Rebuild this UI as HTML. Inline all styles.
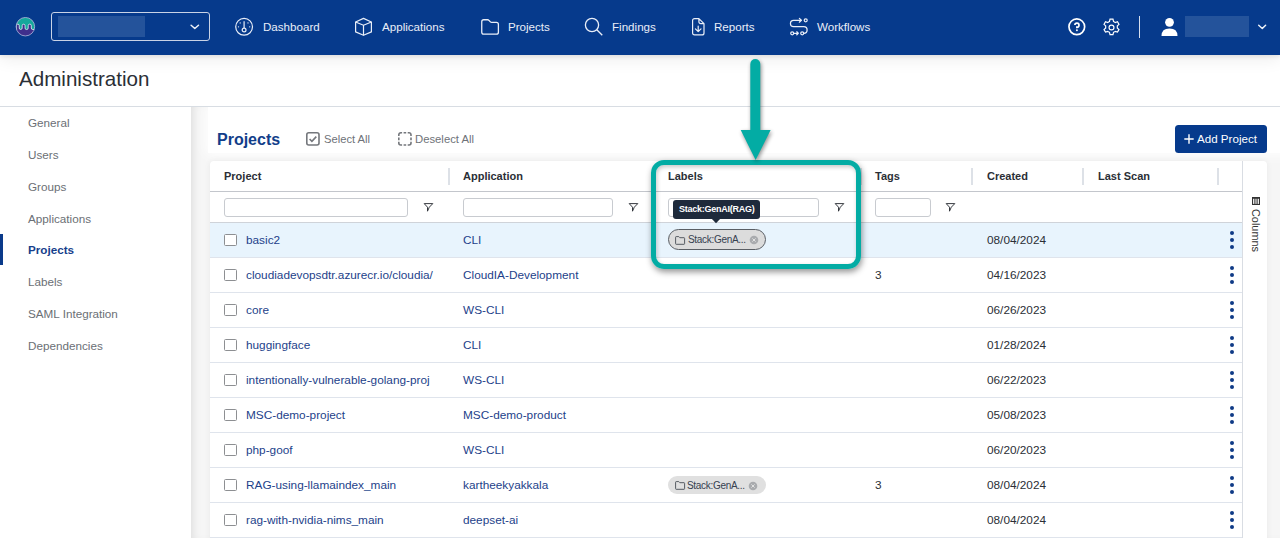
<!DOCTYPE html>
<html><head><meta charset="utf-8">
<style>
*{box-sizing:border-box;margin:0;padding:0}
html,body{width:1280px;height:538px;overflow:hidden;background:#fff;font-family:"Liberation Sans",sans-serif;position:relative}
.abs{position:absolute}
#hdr{position:absolute;left:0;top:0;width:1280px;height:55px;background:#063a8c;z-index:5;box-shadow:0 2px 4px rgba(0,0,0,.08), 0 4px 16px rgba(0,0,0,.08)}
.nav{position:absolute;top:13px;height:28px;color:#e9eef8;font-size:11.6px;line-height:28px;white-space:nowrap}
#titlebar{z-index:3;position:absolute;left:0;top:54px;width:1280px;height:53px;background:#fff;border-bottom:1px solid #d8dde3}
#titlebar span{position:absolute;left:19px;top:13px;font-size:20.6px;line-height:24px;color:#2b2f36}
#side{position:absolute;left:0;top:107px;width:191px;height:431px;background:#fff}
.si{position:absolute;left:28px;font-size:11.7px;line-height:14px;color:#6b6f75;white-space:nowrap}
#main{position:absolute;left:191px;top:107px;width:1089px;height:431px;background:#f6f6f6;box-shadow:inset 7px 0 8px -5px rgba(0,0,0,.10)}
#tb{position:absolute;left:208px;top:107px;width:1090px;height:46px;background:#fff;box-shadow:0 0 12px 2px #fff}
#card{position:absolute;left:210px;top:161px;width:1057px;height:400px;background:#fff;border-radius:4px;box-shadow:0 0 6px rgba(0,0,0,.06)}
.hd{position:absolute;top:169px;font-size:11px;line-height:14px;font-weight:bold;color:#2b2f36;white-space:nowrap}
.sep{position:absolute;top:168px;width:1.5px;height:17px;background:#dde1e7}
.fin{position:absolute;top:198px;height:19px;border:1px solid #c8cbd0;border-radius:3px;background:#fff}
.row{position:absolute;left:210px;width:1032px;height:35px;border-bottom:1px solid #dfe4ec}
.cell{position:absolute;font-size:11.8px;line-height:14px;color:#1d3f8a;white-space:nowrap}
.cb{position:absolute;left:224px;width:13px;height:13px;border:1.6px solid #8d8f92;border-radius:1.5px;background:#fff}
.chip{position:absolute;left:668px;width:98px;height:21px;border:1.2px solid #5a5e64;border-radius:11px;background:#dcdcdc;font-size:10px;letter-spacing:-0.3px;color:#364150;white-space:nowrap}
.chip span{position:absolute;left:19px;top:4px;line-height:12px}
.dk{position:absolute;left:1230px;width:4px;height:4px;border-radius:50%;background:#0f3a86}
</style></head>
<body>
<div id="hdr">
<svg class="abs" style="left:15px;top:17px" width="21" height="21" viewBox="0 0 21 21">
<defs><clipPath id="lc"><circle cx="10.4" cy="9.7" r="9.2"/></clipPath></defs>
<circle cx="10.4" cy="9.7" r="9.2" fill="#3f2f8c"/>
<path clip-path="url(#lc)" d="M-1,-1 H22 V12.5 H17.8 A1.5,1.5 0 0 1 16.3,11 V8.65 A1.55,1.55 0 0 0 13.2,8.65 V11 A1.575,1.575 0 0 1 10.05,11 V8.65 A1.45,1.45 0 0 0 7.15,8.65 V11 A1.45,1.45 0 0 1 4.25,11 V8.65 A1.5,1.5 0 0 0 1.25,8.65 V22 H-1 Z" fill="#15a89c" stroke="#e8f0f8" stroke-width="0.8"/>
<circle cx="10.4" cy="9.7" r="9.25" fill="none" stroke="#c7c9e6" stroke-width="0.7"/>
</svg>
<div class="abs" style="left:51px;top:12px;width:159px;height:29px;border:1.5px solid #c9d3e6;border-radius:3px"></div>
<div class="abs" style="left:58px;top:16px;width:87px;height:21px;background:#24539b"></div>
<svg class="abs" style="left:189px;top:22px" width="11" height="8" viewBox="0 0 11 8"><path d="M2.1,3.3 L5.8,6.5 L9.5,3.3" fill="none" stroke="#eef2f8" stroke-width="1.5" stroke-linecap="round" stroke-linejoin="round"/></svg>
<svg class="abs" style="left:234px;top:17px" width="20" height="20" viewBox="0 0 20 20" fill="none" stroke="#e9eef8" stroke-width="1.2">
<circle cx="10.1" cy="9.8" r="8.4"/><path d="M10.1,4.2 V11.1"/><circle cx="10.1" cy="13" r="1.9"/>
<g fill="#e9eef8" stroke="none"><circle cx="6.2" cy="5.9" r=".65"/><circle cx="14" cy="5.9" r=".65"/><circle cx="4.5" cy="9.8" r=".65"/><circle cx="15.7" cy="9.8" r=".65"/></g>
</svg>
<div class="nav" style="left:263px">Dashboard</div>
<svg class="abs" style="left:354px;top:17px" width="20" height="20" viewBox="0 0 20 20" fill="none" stroke="#e9eef8" stroke-width="1.2" stroke-linejoin="round">
<path d="M9.5,1.4 L17.4,5 V14.9 L9.5,18.3 L1.6,14.9 V5 Z"/><path d="M1.6,5 L9.5,8.2 L17.4,5 M9.5,8.2 V18.3"/></svg>
<div class="nav" style="left:382px">Applications</div>
<svg class="abs" style="left:480px;top:18px" width="20" height="18" viewBox="0 0 20 18" fill="none" stroke="#e9eef8" stroke-width="1.3" stroke-linejoin="round">
<path d="M1.75,3.75 Q1.75,1.75 3.75,1.75 H7.6 Q8.3,1.75 8.8,2.3 L10.4,3.9 Q10.9,4.4 11.6,4.4 H16.4 Q18.4,4.4 18.4,6.4 V14.2 Q18.4,16.2 16.4,16.2 H3.75 Q1.75,16.2 1.75,14.2 Z"/></svg>
<div class="nav" style="left:508px">Projects</div>
<svg class="abs" style="left:584px;top:17px" width="20" height="20" viewBox="0 0 20 20" fill="none" stroke="#e9eef8" stroke-width="1.3">
<circle cx="8" cy="8" r="6.6"/><path d="M12.8,12.8 L18.3,18.3"/></svg>
<div class="nav" style="left:612px">Findings</div>
<svg class="abs" style="left:690px;top:17px" width="16" height="20" viewBox="0 0 16 20" fill="none" stroke="#e9eef8" stroke-width="1.2" stroke-linejoin="round" stroke-linecap="round">
<path d="M2.6,3.6 Q2.6,1.6 4.6,1.6 H8.9 L14,6.7 V15.9 Q14,17.9 12,17.9 H4.6 Q2.6,17.9 2.6,15.9 Z M8.9,1.6 V4.7 Q8.9,6.7 10.9,6.7 H14"/><path d="M8.2,9.1 V14.6 M5.4,11.9 L8.2,14.7 L11,11.9"/></svg>
<div class="nav" style="left:714px">Reports</div>
<svg class="abs" style="left:789px;top:17px" width="20" height="20" viewBox="0 0 20 20" fill="none" stroke="#e9eef8" stroke-width="1.25" stroke-linecap="round" stroke-linejoin="round">
<path d="M12.2,3.3 H4.6 A3.15,3.15 0 0 0 4.6,9.6 H14.8 A3.35,3.35 0 0 1 14.7,16.3"/><path d="M10.4,1.4 L12.3,3.3 L10.4,5.2"/><circle cx="16.7" cy="3.3" r="1.5"/>
<circle cx="3.2" cy="16.3" r="1.5"/><circle cx="13.2" cy="16.3" r="1.5"/><path d="M5.2,16.3 H9.2 M7.8,14.8 L9.3,16.3 L7.8,17.8"/></svg>
<div class="nav" style="left:817px">Workflows</div>
<svg class="abs" style="left:1067px;top:17px" width="20" height="20" viewBox="0 0 20 20" fill="none" stroke="#fff" stroke-width="1.7">
<circle cx="9.8" cy="9.8" r="7.85"/><path d="M7.9,8.1 A2.05,2.05 0 1 1 9.9,10.2 V11.3" stroke-width="1.7"/><circle cx="9.9" cy="13.2" r=".95" fill="#fff" stroke="none"/></svg>
<svg class="abs" style="left:1101px;top:17px" width="21" height="21" viewBox="0 0 24 24" fill="none" stroke="#fff" stroke-width="1.35">
<path d="M10.3,2.5 h3.4 l.6,2.6 a7.5,7.5 0 0 1 2,1.15 l2.55,-.8 1.7,2.95 -1.95,1.8 a7.5,7.5 0 0 1 0,2.3 l1.95,1.8 -1.7,2.95 -2.55,-.8 a7.5,7.5 0 0 1 -2,1.15 l-.6,2.6 h-3.4 l-.6,-2.6 a7.5,7.5 0 0 1 -2,-1.15 l-2.55,.8 -1.7,-2.95 1.95,-1.8 a7.5,7.5 0 0 1 0,-2.3 l-1.950,-1.8 1.7,-2.95 2.55,.8 a7.5,7.5 0 0 1 2,-1.15 z"/><circle cx="12" cy="12" r="2.8"/></svg>
<div class="abs" style="left:1139px;top:15.5px;width:1.2px;height:22.5px;background:#d5deee"></div>
<svg class="abs" style="left:1161px;top:17px" width="17" height="20" viewBox="0 0 17 20" fill="#fff">
<circle cx="8.5" cy="5.3" r="4.4"/><path d="M0.5,19 Q0.5,11.6 8.5,11.6 Q16.5,11.6 16.5,19 Z"/></svg>
<div class="abs" style="left:1185px;top:16px;width:64px;height:21px;background:#24539b"></div>
<svg class="abs" style="left:1257px;top:22px" width="11" height="8" viewBox="0 0 11 8"><path d="M1.7,3.3 L5.3,6.5 L8.6,3.3" fill="none" stroke="#eef2f8" stroke-width="1.5" stroke-linecap="round" stroke-linejoin="round"/></svg>
</div>
<div id="titlebar"><span>Administration</span></div>
<div id="side">
<div class="abs" style="left:0;top:127px;width:3px;height:31px;background:#0a3a8a"></div>
<div class="si" style="top:9px">General</div>
<div class="si" style="top:41px">Users</div>
<div class="si" style="top:73px">Groups</div>
<div class="si" style="top:105px">Applications</div>
<div class="si" style="top:136px;color:#173f8c;font-weight:bold">Projects</div>
<div class="si" style="top:168px">Labels</div>
<div class="si" style="top:200px">SAML Integration</div>
<div class="si" style="top:232px">Dependencies</div>
</div>
<div id="main"></div><div id="tb"></div>
<div class="abs" style="left:217px;top:130px;font-size:16px;line-height:20px;font-weight:bold;color:#123e8a">Projects</div>
<svg class="abs" style="left:306px;top:132px" width="14" height="14" viewBox="0 0 14 14" fill="none" stroke="#74777c" stroke-width="1.6">
<rect x=".8" y=".8" width="12.2" height="12.2" rx="2"/><path d="M3.6,7 L5.9,9.3 L10.3,4.6"/></svg>
<div class="abs" style="left:324px;top:132px;font-size:11.2px;line-height:14px;color:#6e7278">Select All</div>
<svg class="abs" style="left:398px;top:132px" width="14" height="14" viewBox="0 0 14 14" fill="none" stroke="#74777c" stroke-width="1.6">
<path d="M.8,4.1 V2.8 A2,2 0 0 1 2.8,.8 H4.1 M9.7,.8 H11 A2,2 0 0 1 13,2.8 V4.1 M13,9.7 V11 A2,2 0 0 1 11,13 H9.7 M4.1,13 H2.8 A2,2 0 0 1 .8,11 V9.7 M5.6,.8 H8.2 M13,5.6 V8.2 M8.2,13 H5.6 M.8,8.2 V5.6"/></svg>
<div class="abs" style="left:415px;top:132px;font-size:11.3px;line-height:14px;color:#6e7278">Deselect All</div>
<div class="abs" style="left:1175px;top:125px;width:92px;height:27.5px;background:#063a8c;border-radius:3.5px"></div>
<svg class="abs" style="left:1183px;top:133px" width="12" height="12" viewBox="0 0 12 12"><path d="M6,1.3 V10.7 M1.3,6 H10.7" stroke="#fff" stroke-width="1.4"/></svg>
<div class="abs" style="left:1197px;top:132px;font-size:11.6px;line-height:14px;color:#fff;white-space:nowrap">Add Project</div>
<div id="card"></div>
<div class="hd" style="left:224px">Project</div>
<div class="hd" style="left:463px">Application</div>
<div class="hd" style="left:668px">Labels</div>
<div class="hd" style="left:875px">Tags</div>
<div class="hd" style="left:987px">Created</div>
<div class="hd" style="left:1098px">Last Scan</div>
<div class="sep" style="left:448px"></div>
<div class="sep" style="left:653px"></div>
<div class="sep" style="left:860px"></div>
<div class="sep" style="left:971px"></div>
<div class="sep" style="left:1082px"></div>
<div class="sep" style="left:1217px"></div>
<div class="abs" style="left:210px;top:191px;width:1032px;height:1.3px;background:#c3c6cc"></div>
<div class="fin" style="left:224px;width:184px"></div>
<div class="fin" style="left:463px;width:150px"></div>
<div class="fin" style="left:668px;width:151px"></div>
<div class="fin" style="left:875px;width:56px"></div>
<svg class="abs" style="left:423px;top:202px" width="11" height="11" viewBox="0 0 11 11"><path d="M1.2,1.6 H9.8 L6.3,5.2 L4.5,9.2 V5.2 Z" fill="none" stroke="#2b2f36" stroke-width="0.95" stroke-linejoin="round"/></svg>
<svg class="abs" style="left:628px;top:202px" width="11" height="11" viewBox="0 0 11 11"><path d="M1.2,1.6 H9.8 L6.3,5.2 L4.5,9.2 V5.2 Z" fill="none" stroke="#2b2f36" stroke-width="0.95" stroke-linejoin="round"/></svg>
<svg class="abs" style="left:834px;top:202px" width="11" height="11" viewBox="0 0 11 11"><path d="M1.2,1.6 H9.8 L6.3,5.2 L4.5,9.2 V5.2 Z" fill="none" stroke="#2b2f36" stroke-width="0.95" stroke-linejoin="round"/></svg>
<svg class="abs" style="left:945px;top:202px" width="11" height="11" viewBox="0 0 11 11"><path d="M1.2,1.6 H9.8 L6.3,5.2 L4.5,9.2 V5.2 Z" fill="none" stroke="#2b2f36" stroke-width="0.95" stroke-linejoin="round"/></svg>
<div class="abs" style="left:210px;top:222px;width:1032px;height:1px;background:#cfd3d9"></div>
<div class="row" style="top:223px;background:#e8f4fd;"></div>
<div class="cb" style="top:233.5px;width:12.5px;height:12.5px"></div>
<div class="cell" style="left:246px;top:233px">basic2</div>
<div class="cell" style="left:463px;top:233px">CLI</div>
<div class="chip" style="top:229px;"><svg class="abs" style="left:6px;top:6px" width="11" height="10" viewBox="0 0 11 10"><path d="M.6,1.2 Q.6,.6 1.2,.6 H3.8 L4.8,1.7 H9 Q9.6,1.7 9.6,2.3 V7.7 Q9.6,8.3 9,8.3 H1.2 Q.6,8.3 .6,7.7 Z" fill="none" stroke="#555b62" stroke-width="1"/></svg><span>Stack:GenA...</span><svg class="abs" style="left:80px;top:5px" width="10" height="10" viewBox="0 0 10 10"><circle cx="5" cy="5" r="4.3" fill="#a9abae"/><path d="M3.4,3.4 L6.6,6.6 M6.6,3.4 L3.4,6.6" stroke="#e2e2e2" stroke-width="1"/></svg></div>
<div class="cell" style="left:987px;top:233px;color:#2b2f36">08/04/2024</div>
<div class="dk" style="top:231px"></div><div class="dk" style="top:238px"></div><div class="dk" style="top:245px"></div>
<div class="row" style="top:258px;"></div>
<div class="cb" style="top:268.5px;width:12.5px;height:12.5px"></div>
<div class="cell" style="left:246px;top:268px">cloudiadevopsdtr.azurecr.io/cloudia/</div>
<div class="cell" style="left:463px;top:268px">CloudIA-Development</div>
<div class="cell" style="left:875px;top:268px;color:#2b2f36">3</div>
<div class="cell" style="left:987px;top:268px;color:#2b2f36">04/16/2023</div>
<div class="dk" style="top:266px"></div><div class="dk" style="top:273px"></div><div class="dk" style="top:280px"></div>
<div class="row" style="top:293px;"></div>
<div class="cb" style="top:303.5px;width:12.5px;height:12.5px"></div>
<div class="cell" style="left:246px;top:303px">core</div>
<div class="cell" style="left:463px;top:303px">WS-CLI</div>
<div class="cell" style="left:987px;top:303px;color:#2b2f36">06/26/2023</div>
<div class="dk" style="top:301px"></div><div class="dk" style="top:308px"></div><div class="dk" style="top:315px"></div>
<div class="row" style="top:328px;"></div>
<div class="cb" style="top:338.5px;width:12.5px;height:12.5px"></div>
<div class="cell" style="left:246px;top:338px">huggingface</div>
<div class="cell" style="left:463px;top:338px">CLI</div>
<div class="cell" style="left:987px;top:338px;color:#2b2f36">01/28/2024</div>
<div class="dk" style="top:336px"></div><div class="dk" style="top:343px"></div><div class="dk" style="top:350px"></div>
<div class="row" style="top:363px;"></div>
<div class="cb" style="top:373.5px;width:12.5px;height:12.5px"></div>
<div class="cell" style="left:246px;top:373px">intentionally-vulnerable-golang-proj</div>
<div class="cell" style="left:463px;top:373px">WS-CLI</div>
<div class="cell" style="left:987px;top:373px;color:#2b2f36">06/22/2023</div>
<div class="dk" style="top:371px"></div><div class="dk" style="top:378px"></div><div class="dk" style="top:385px"></div>
<div class="row" style="top:398px;"></div>
<div class="cb" style="top:408.5px;width:12.5px;height:12.5px"></div>
<div class="cell" style="left:246px;top:408px">MSC-demo-project</div>
<div class="cell" style="left:463px;top:408px">MSC-demo-product</div>
<div class="cell" style="left:987px;top:408px;color:#2b2f36">05/08/2023</div>
<div class="dk" style="top:406px"></div><div class="dk" style="top:413px"></div><div class="dk" style="top:420px"></div>
<div class="row" style="top:433px;"></div>
<div class="cb" style="top:443.5px;width:12.5px;height:12.5px"></div>
<div class="cell" style="left:246px;top:443px">php-goof</div>
<div class="cell" style="left:463px;top:443px">WS-CLI</div>
<div class="cell" style="left:987px;top:443px;color:#2b2f36">06/20/2023</div>
<div class="dk" style="top:441px"></div><div class="dk" style="top:448px"></div><div class="dk" style="top:455px"></div>
<div class="row" style="top:468px;"></div>
<div class="cb" style="top:478.5px;width:12.5px;height:12.5px"></div>
<div class="cell" style="left:246px;top:478px">RAG-using-llamaindex_main</div>
<div class="cell" style="left:463px;top:478px">kartheekyakkala</div>
<div class="chip" style="top:476px;border:none;height:18px;background:#e0e0e0"><svg class="abs" style="left:7px;top:5px" width="11" height="10" viewBox="0 0 11 10"><path d="M.6,1.2 Q.6,.6 1.2,.6 H3.8 L4.8,1.7 H9 Q9.6,1.7 9.6,2.3 V7.7 Q9.6,8.3 9,8.3 H1.2 Q.6,8.3 .6,7.7 Z" fill="none" stroke="#555b62" stroke-width="1"/></svg><span>Stack:GenA...</span><svg class="abs" style="left:80px;top:5px" width="10" height="10" viewBox="0 0 10 10"><circle cx="5" cy="5" r="4.3" fill="#a9abae"/><path d="M3.4,3.4 L6.6,6.6 M6.6,3.4 L3.4,6.6" stroke="#e2e2e2" stroke-width="1"/></svg></div>
<div class="cell" style="left:875px;top:478px;color:#2b2f36">3</div>
<div class="cell" style="left:987px;top:478px;color:#2b2f36">08/04/2024</div>
<div class="dk" style="top:476px"></div><div class="dk" style="top:483px"></div><div class="dk" style="top:490px"></div>
<div class="row" style="top:503px;"></div>
<div class="cb" style="top:513.5px;width:12.5px;height:12.5px"></div>
<div class="cell" style="left:246px;top:513px">rag-with-nvidia-nims_main</div>
<div class="cell" style="left:463px;top:513px">deepset-ai</div>
<div class="cell" style="left:987px;top:513px;color:#2b2f36">08/04/2024</div>
<div class="dk" style="top:511px"></div><div class="dk" style="top:518px"></div><div class="dk" style="top:525px"></div>
<div class="abs" style="left:1242px;top:161px;width:1px;height:377px;background:#d9dde3"></div>
<svg class="abs" style="left:1252px;top:197px" width="8" height="8" viewBox="0 0 8 8" fill="none" stroke="#333" stroke-width="1.1"><rect x=".55" y=".55" width="6.9" height="6.9"/><path d="M.5,1.3 H7.5 M2.9,.6 V7.4 M5.1,.6 V7.4"/></svg>
<div class="abs" style="left:1250px;top:209px;writing-mode:vertical-rl;font-size:10.9px;line-height:11px;color:#333">Columns</div>
<div class="abs" style="left:651px;top:160px;width:210px;height:109px;border:5px solid #03aca4;border-radius:13px;box-shadow:1px 3px 6px rgba(0,0,0,.42), inset 1px 2px 4px rgba(0,0,0,.22)"></div>
<svg class="abs" style="left:730px;top:54px;overflow:visible;z-index:10" width="52" height="112" viewBox="730 54 52 112">
<defs><filter id="sh" x="-50%" y="-20%" width="200%" height="150%" color-interpolation-filters="sRGB"><feGaussianBlur in="SourceAlpha" stdDeviation="2"/><feOffset dx="1" dy="2"/><feComponentTransfer><feFuncA type="linear" slope="0.45"/></feComponentTransfer><feMerge><feMergeNode/><feMergeNode in="SourceGraphic"/></feMerge></filter></defs>
<g filter="url(#sh)"><path d="M755.3,64 V132" stroke="#03aca4" stroke-width="10" stroke-linecap="round"/><path d="M740.7,130 H770.6 L755.6,160 Z" fill="#03aca4"/></g></svg>
<div class="abs" style="left:672.5px;top:200px;width:87.5px;height:18.5px;background:#1e2a3b;border-radius:3px"></div>
<svg class="abs" style="left:711px;top:218px" width="10" height="6" viewBox="0 0 10 6"><path d="M0,0 H10 L5,5.2 Z" fill="#1e2a3b"/></svg>
<div class="abs" style="left:679px;top:203px;font-size:9px;line-height:12px;font-weight:bold;letter-spacing:-0.25px;color:#fff;white-space:nowrap">Stack:GenAI(RAG)</div>
</body></html>
